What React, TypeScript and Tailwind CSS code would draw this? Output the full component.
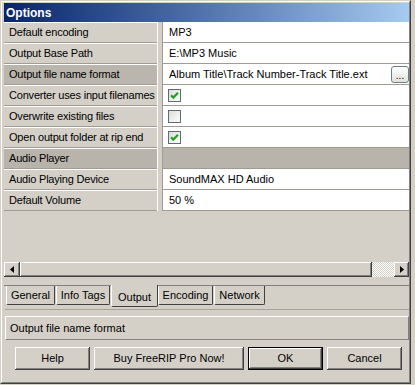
import React from "react";

type Row = {
  label: string;
  value?: string;
  check?: boolean;
  selected?: boolean;
  category?: boolean;
  browse?: boolean;
};

const rows: Row[] = [
  { label: "Default encoding", value: "MP3" },
  { label: "Output Base Path", value: "E:\\MP3 Music" },
  { label: "Output file name format", value: "Album Title\\Track Number-Track Title.ext", selected: true, browse: true },
  { label: "Converter uses input filenames", check: true },
  { label: "Overwrite existing files", check: false },
  { label: "Open output folder at rip end", check: true },
  { label: "Audio Player", category: true },
  { label: "Audio Playing Device", value: "SoundMAX HD Audio" },
  { label: "Default Volume", value: "50 %" },
];

const raised =
  "bg-[#d4d0c8] shadow-[inset_-1px_-1px_#404040,inset_1px_1px_#ffffff,inset_-2px_-2px_#808080,inset_2px_2px_#d4d0c8]";

function CheckBox({ checked }: { checked: boolean }) {
  return (
    <svg width="13" height="13" viewBox="0 0 13 13">
      <defs>
        <linearGradient id="cbg" x1="0" y1="0" x2="1" y2="1">
          <stop offset="0" stopColor="#dcdcd6" />
          <stop offset="1" stopColor="#ffffff" />
        </linearGradient>
      </defs>
      <rect x="0.5" y="0.5" width="12" height="12" fill="url(#cbg)" stroke="#5d6b78" />
      {checked && (
        <path d="M3 6.2 L5.3 8.6 L10 3.8" fill="none" stroke="#21a121" strokeWidth="2.2" />
      )}
    </svg>
  );
}

function Arrow({ dir }: { dir: "left" | "right" }) {
  return (
    <svg width="4" height="7" viewBox="0 0 4 7">
      {dir === "left" ? <path d="M4 0 L0 3.5 L4 7 Z" fill="#000" /> : <path d="M0 0 L4 3.5 L0 7 Z" fill="#000" />}
    </svg>
  );
}

function GridRow({ row }: { row: Row }) {
  const labelBg = row.category ? "bg-[#b8b4ac]" : row.selected ? "bg-[#bab6ae]" : "bg-[#d4d0c8]";
  return (
    <div className="flex h-[21px]">
      <div className={`w-[153px] ${labelBg} border-t border-b border-t-white border-b-[#a09c94] pl-[5px] flex items-center whitespace-nowrap overflow-hidden tracking-[-0.2px]`}>
        {row.label}
      </div>
      <div className="w-[6px] bg-[#d4d0c8] border-l border-r border-l-white border-r-[#a09c94]" />
      <div
        className={`flex-1 ${row.category ? "bg-[#b8b4ac]" : "bg-white"} border-b border-[#a09c94] flex items-center pl-[5px] whitespace-nowrap`}
      >
        {row.check !== undefined ? (
          <CheckBox checked={row.check} />
        ) : (
          <span className="pl-[1px]">{row.value}</span>
        )}
        {row.browse && (
          <div className="ml-auto w-[18px] h-[17px] rounded-[3px] border border-[#6e7e90] bg-gradient-to-b from-white to-[#e2e2da] flex items-end justify-center pb-[1px] leading-none text-[10px]">
            ...
          </div>
        )}
      </div>
    </div>
  );
}

export default function App() {
  const tabs = [
    { name: "General", w: "w-[49px]" },
    { name: "Info Tags", w: "w-[54px]" },
    { name: "Output", w: "w-[47px]", active: true },
    { name: "Encoding", w: "w-[55px]" },
    { name: "Network", w: "w-[51px]" },
  ];

  return (
    <div className="w-[415px] h-[385px] bg-[#d4d0c8] text-[11px] text-black font-['Liberation_Sans',sans-serif] overflow-hidden">
      <div className="w-[411px] h-[384px] border border-t-[#d4d0c8] border-l-[#d4d0c8] border-r-[#404040] border-b-[#404040] flex">
        <div className="flex-1 flex flex-col border border-t-white border-l-white border-r-[#808080] border-b-[#808080] pl-[2px] pt-[1px]">
          {/* Title bar */}
          <div className="h-[19px] bg-gradient-to-r from-[#0a246a] to-[#a6caf0] text-white font-bold text-[12px] flex items-center pl-[2px]">
            Options
          </div>

          {/* Property grid */}
          <div className="flex flex-col">
            {rows.map((r) => (
              <GridRow key={r.label} row={r} />
            ))}
            <div className="h-[51px]" />
            {/* Horizontal scrollbar */}
            <div className="flex h-[15px]">
              <div className={`w-[16px] ${raised} flex items-center justify-center`}>
                <Arrow dir="left" />
              </div>
              <div className={`w-[352px] ${raised}`} />
              <div className="flex-1 bg-[repeating-conic-gradient(#ffffff_0_25%,#d4d0c8_0_50%)] bg-[length:2px_2px]" />
              <div className={`w-[15px] ${raised} flex items-center justify-center`}>
                <Arrow dir="right" />
              </div>
            </div>
          </div>

          {/* Tabs */}
          <div className="mt-[8px] border-t border-[#808080] flex pl-[2px] h-[22px]">
            {tabs.map((t) =>
              t.active ? (
                <div
                  key={t.name}
                  className={`${t.w} -mt-[1px] h-[22px] bg-[#d4d0c8] border-l border-r border-b border-l-white border-r-[#404040] border-b-[#404040] rounded-b-[2px] flex items-center justify-center pt-[4px]`}
                >
                  {t.name}
                </div>
              ) : (
                <div
                  key={t.name}
                  className={`${t.w} h-[19px] mr-[1px] bg-[#d4d0c8] border-l border-r border-b border-l-white border-r-[#404040] border-b-[#404040] rounded-b-[2px] flex items-center justify-center pt-[1px]`}
                >
                  {t.name}
                </div>
              )
            )}
          </div>

          {/* Description */}
          <div className="mt-[2px] ml-[1px] border-t border-[#a8a49c] pt-[6px]">
            <div className="h-[24px] border-t border-l border-t-white border-l-white border-b border-r border-b-[#808080] border-r-[#808080] flex items-center pl-[4px]">
              Output file name format
            </div>
          </div>

          {/* Buttons */}
          <div className="mt-[7px] flex pl-[11px] gap-[4px]">
            <button className={`w-[75px] h-[23px] ${raised}`}>Help</button>
            <button className={`w-[150px] h-[23px] ${raised}`}>Buy FreeRIP Pro Now!</button>
            <div className="w-[75px] h-[23px] border border-black">
              <button className={`w-full h-full ${raised}`}>OK</button>
            </div>
            <button className={`w-[75px] h-[23px] ${raised}`}>Cancel</button>
          </div>
        </div>
      </div>
    </div>
  );
}
